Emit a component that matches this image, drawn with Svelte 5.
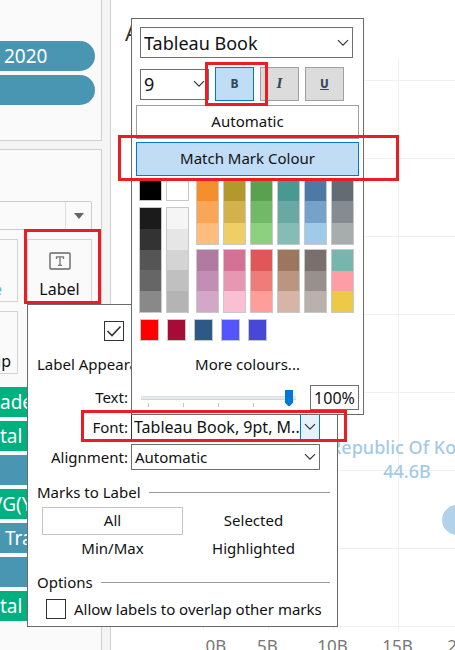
<script>
  const shelfPills = [{ text: '2020', pad: 4 }, { text: '', pad: 0 }];
  const markPills = [
    { text: 'ade', kind: 'green', indent: 0 },
    { text: 'tal T', kind: 'green', indent: 0 },
    { text: '', kind: 'blue', indent: 0 },
    { text: 'VG(Y', kind: 'green', indent: -9 },
    { text: 'Tra', kind: 'blue', indent: 5 },
    { text: '', kind: 'blue', indent: 0 },
    { text: 'tal T', kind: 'green', indent: 0 }
  ];
  const ramps = [
    ['#f58f2c', '#f9a756', '#ffbd7d'],
    ['#b3982b', '#d2b24b', '#f0ce66'],
    ['#59a14f', '#71b966', '#8dd17f'],
    ['#499993', '#69a9a4', '#86bcb6'],
    ['#4e79a7', '#76a1c8', '#a0cbe8'],
    ['#636c75', '#848b92', '#a7adad'],
    ['#b07aa1', '#c28eb6', '#d4a6c8'],
    ['#d37295', '#e697b2', '#fabfd2'],
    ['#e15759', '#f07c79', '#ff9d9a'],
    ['#9d7660', '#ba9580', '#d7b5a6'],
    ['#79706e', '#98908d', '#bab0ac'],
    ['#78b5ae', '#ff9da7', '#edc948']
  ];
  const darks = ['#1b1b1b', '#333333', '#555555', '#666666', '#898989'];
  const lights = ['#f5f5f5', '#e6e6e6', '#d4d4d4', '#c0c0c0', '#b4b4b4'];
  const custom = ['#ff0000', '#a60c35', '#2c5985', '#5555ff', '#4747d8'];
  const axis = ['0B', '5B', '10B', '15B', '20B'];

  let scope = $state('All');
  let opacity = $state(100);
  let showLabels = $state(true);
  let overlap = $state(false);
</script>

{#snippet chevron()}
  <svg class="chev" viewBox="0 0 12 8" width="12" height="8" aria-hidden="true">
    <path d="M1 1.2 L6 6.2 L11 1.2" fill="none" stroke="#333" stroke-width="1.2" />
  </svg>
{/snippet}

<div class="app">
  <aside class="side">
    <section class="card shelf">
      {#each shelfPills as p}
        <div class="pill blue round" style="padding-left: {p.pad}px">{p.text}</div>
      {/each}
    </section>
    <section class="card marks">
      <div class="mark-type">
        <select aria-label="Mark type"><option></option></select>
        <span class="tri"><svg width="10" height="6" viewBox="0 0 10 6" aria-hidden="true"><path d="M0 0H10L5 6Z" fill="#666" /></svg></span>
      </div>
      <div class="tiles">
        <button class="tile cut size">e</button>
        <button class="tile">
          <svg width="22" height="18" viewBox="0 0 22 18" aria-hidden="true">
            <rect x="1" y="1" width="20" height="16" rx="1" fill="none" stroke="#666" stroke-width="1.4" />
            <path d="M7.5 7V4.8H14.5V7M11 4.8V13.4M9 13.4H13" fill="none" stroke="#777" stroke-width="1.3" />
          </svg>
          Label
        </button>
        <button class="tile cut">ip</button>
      </div>
      <div class="pills">
        {#each markPills as p}
          <div class="pill {p.kind}" style="text-indent: {p.indent}px">{p.text}</div>
        {/each}
      </div>
    </section>
  </aside>

  <main class="view">
    <h1>A</h1>
    <div class="plot">
      <div class="rows"></div>
      <div class="cols"></div>
      <div class="point-label">Republic Of Korea<br />44.6B</div>
      <div class="point"></div>
    </div>
    <div class="axis">
      {#each axis as a}<span>{a}</span>{/each}
    </div>
  </main>

  <div class="label-menu">
    <label class="show"><input type="checkbox" bind:checked={showLabels} />Show mark labels</label>
    <h2>Label Appearance</h2>
    <div class="form">
      <label for="text">Text:</label>
      <input id="text" type="text" class="field" />
      <label for="font">Font:</label>
      <div class="drop open">
        <select id="font"><option>Tableau Book, 9pt, M..</option></select>
        {@render chevron()}
      </div>
      <label for="align">Alignment:</label>
      <div class="drop">
        <select id="align"><option>Automatic</option></select>
        {@render chevron()}
      </div>
    </div>
    <h2 class="ruled">Marks to Label</h2>
    <div class="scope">
      {#each ['All', 'Selected', 'Min/Max', 'Highlighted'] as s}
        <button class:active={scope === s} onclick={() => (scope = s)}>{s}</button>
      {/each}
    </div>
    <h2 class="ruled options">Options</h2>
    <label class="overlap"><input type="checkbox" bind:checked={overlap} />Allow labels to overlap other marks</label>
  </div>

  <div class="font-menu">
    <div class="drop family">
      <select aria-label="Font family"><option>Tableau Book</option></select>
      {@render chevron()}
    </div>
    <div class="style-row">
      <div class="drop pt">
        <select aria-label="Font size"><option>9</option></select>
        {@render chevron()}
      </div>
      <button class="fmt on"><b>B</b></button>
      <button class="fmt"><i>I</i></button>
      <button class="fmt"><u>U</u></button>
    </div>
    <div class="modes">
      <button>Automatic</button>
      <button class="on">Match Mark Colour</button>
    </div>
    <div class="palette">
      <div class="greys">
        <button class="sw base" aria-label="Black" style="background: #000"></button>
        <button class="sw base" aria-label="White" style="background: #fff"></button>
        {#each [darks, lights] as ramp}
          <div class="sw ramp">
            {#each ramp as c}<button aria-label={c} style="background: {c}"></button>{/each}
          </div>
        {/each}
      </div>
      <div class="hues">
        {#each ramps as ramp}
          <div class="sw ramp">
            {#each ramp as c}<button aria-label={c} style="background: {c}"></button>{/each}
          </div>
        {/each}
      </div>
    </div>
    <div class="custom">
      {#each custom as c}<button class="sw" aria-label={c} style="background: {c}"></button>{/each}
    </div>
    <button class="more">More colours...</button>
    <div class="opacity">
      <div class="slider">
        <input type="range" min="0" max="100" bind:value={opacity} aria-label="Opacity" />
        <div class="ticks"><span></span><span></span><span></span><span></span></div>
      </div>
      <input class="pct" type="text" value="{opacity}%" aria-label="Opacity percent" />
    </div>
  </div>

  <div class="hl hl-label"></div>
  <div class="hl hl-bold"></div>
  <div class="hl hl-match"></div>
  <div class="hl hl-font"></div>
</div>

<style>
  :global(body) { margin: 0; }
  .app, .app * { box-sizing: border-box; }
  .app {
    position: relative;
    display: grid;
    grid-template-columns: 111px 1fr;
    height: 100vh;
    overflow: hidden;
    background: #fff;
    color: #111;
    font: 15px/22px "Noto Sans", "Open Sans", sans-serif;
  }
  button, select, input { font: inherit; color: inherit; margin: 0; }
  button { padding: 0; border: 0; background: none; }
  h1, h2 { margin: 0; font-weight: 400; }

  .side {
    display: flex;
    flex-direction: column;
    gap: 8px;
    min-height: 0;
    background: #f4f4f4;
    border-right: 1px solid #d0d0d0;
    padding-right: 8px;
    overflow: hidden;
  }
  .card { background: #fafafa; border: 1px solid #d0d0d0; border-left: 0; }
  .shelf { display: grid; gap: 4px; border-top: 0; padding: 41px 6px 35px 0; }
  .marks { flex: 1; padding-top: 51px; }
  .pill {
    height: 30px;
    color: #fff;
    font-size: 19px;
    line-height: 30px;
    white-space: nowrap;
    overflow: hidden;
  }
  .round { border-radius: 0 15px 15px 0; }
  .blue { background: #4996b2; }
  .green { background: #00b180; }
  .pills { display: grid; gap: 4px; margin: 13px 10px 0 0; }
  .mark-type {
    display: flex;
    width: 92px;
    height: 29px;
    border: 1px solid #ccc;
    border-left: 0;
    border-radius: 0 2px 2px 0;
  }
  .mark-type select { flex: 1; min-width: 0; appearance: none; border: 0; background: none; }
  .tri { display: grid; place-items: center; width: 26px; border-left: 1px solid #ddd; }
  .tiles {
    display: grid;
    grid-template-columns: 18px 65px;
    gap: 9px;
    margin-top: 9px;
  }
  .tile {
    display: flex;
    flex-direction: column;
    align-items: center;
    justify-content: flex-end;
    gap: 8px;
    height: 63px;
    padding-bottom: 1px;
    border: 1px solid #d4d4d4;
    font-size: 16px;
  }
  .cut { border-left: 0; align-items: flex-end; padding-right: 6px; }
  .cut.size { padding-right: 15px; color: #6ab8e8; }

  .view { display: flex; flex-direction: column; }
  h1 { padding: 18px 0 0 14px; height: 59px; font-size: 22px; line-height: 28px; color: #333; }
  .plot { position: relative; flex: none; height: 571px; margin-left: 92px; }
  .rows {
    position: absolute;
    inset: 21px 0 0;
    background: repeating-linear-gradient(to bottom, #f0f0f0 0 1px, transparent 1px 78px);
  }
  .cols {
    position: absolute;
    inset: 0;
    background: repeating-linear-gradient(to right, #f0f0f0 0 1px, transparent 1px 65px);
  }
  .point-label {
    position: absolute;
    left: 126px;
    top: 376px;
    width: 156px;
    color: #a4cae6;
    font-size: 18px;
    font-weight: 500;
    line-height: 24px;
    text-align: center;
    white-space: nowrap;
  }
  .point {
    position: absolute;
    left: 239px;
    top: 446px;
    width: 30px;
    height: 30px;
    border-radius: 50%;
    background: #b1d2e9;
  }
  .axis { display: flex; margin-left: 86px; color: #777; font-size: 17px; line-height: 32px; }
  .axis span { flex: 0 0 65px; text-align: center; }
  .axis span:first-child { flex-basis: 38px; }

  .drop {
    position: relative;
    display: flex;
    align-items: center;
    border: 1px solid #707070;
    background: #fff;
  }
  .drop select {
    appearance: none;
    width: 100%;
    height: 100%;
    border: 0;
    padding: 0 0 0 3px;
    background: none;
  }
  .chev { position: absolute; right: 3px; }

  input[type='checkbox'] {
    appearance: none;
    flex: none;
    width: 20px;
    height: 20px;
    border: 1px solid #333;
    background: #fff;
  }
  input[type='checkbox']:checked {
    background: #fff url("data:image/svg+xml,%3Csvg xmlns='http://www.w3.org/2000/svg' viewBox='0 0 18 18'%3E%3Cpath d='M2.5 9L7 13.5L15.5 4.5' fill='none' stroke='%23333' stroke-width='1.6'/%3E%3C/svg%3E");
  }

  .label-menu {
    position: absolute;
    left: 27px;
    top: 304px;
    width: 311px;
    padding: 16px 7px 7px 9px;
    border: 1px solid #6b6b6b;
    background: #fff;
  }
  h2 { font-size: 15px; line-height: 22px; }
  .show, .overlap { display: flex; align-items: center; gap: 8px; height: 20px; white-space: nowrap; }
  .show { margin-left: 67px; }
  .show + h2 { margin-top: 12px; }
  .form {
    display: grid;
    grid-template-columns: 91px 189px;
    grid-auto-rows: 26px;
    gap: 4px 3px;
    margin-top: 9px;
  }
  .form label { text-align: right; line-height: 26px; }
  .field { border: 1px solid #707070; min-width: 0; }
  .open { border-color: #333; font-size: 16px; }
  .open select { padding-left: 2px; }
  .open::after {
    content: '';
    position: absolute;
    right: -1px;
    top: 0;
    bottom: 0;
    width: 18px;
    border: solid #0078d7;
    border-width: 0 1px;
    background: #e5f1fb;
  }
  .open .chev { z-index: 1; }
  .ruled { display: flex; align-items: center; gap: 8px; margin-top: 11px; }
  .ruled::after { content: ''; flex: 1; height: 1px; background: #999; }
  .scope { display: grid; grid-template-columns: 141px 141px; margin: 4px 0 0 5px; }
  .scope button { height: 28px; padding-bottom: 2px; line-height: 22px; border: 1px solid transparent; }
  .scope .active { border-color: #c4c4c4; }
  .options { margin-top: 8px; }
  .overlap { margin: 6px 0 0 9px; }

  .font-menu {
    position: absolute;
    left: 131px;
    top: 18px;
    width: 233px;
    padding: 8px 4px 4px;
    border: 1px solid #6b6b6b;
    background: #fff;
  }
  .family { height: 31px; margin: 0 6px 0 4px; font-size: 18px; }
  .pt { width: 69px; height: 31px; font-size: 18px; }
  .style-row { display: flex; align-items: center; gap: 6px; margin: 9px 0 0 4px; }
  .fmt {
    width: 39px;
    height: 34px;
    border: 1px solid #a0a0a0;
    background: #dcdcdc;
    color: #34495e;
    font: 700 12px/1 "DejaVu Sans Condensed", sans-serif;
  }
  .fmt i { font-family: "DejaVu Serif", serif; }
  .on { background: #c0ddf5; border-color: #0078d7; }
  .modes { display: grid; gap: 3px; margin-top: 4px; }
  .modes button { height: 34px; padding-bottom: 2px; border: 1px solid #a0a0a0; }
  .modes .on { border-color: #0078d7; }
  .palette { display: flex; gap: 7px; margin: 3px 0 0 3px; }
  .greys { display: grid; grid-template: 22px 106px / 23px 23px; gap: 6px 4px; }
  .hues { display: grid; grid-template: 66px 64px / repeat(6, 23px); gap: 4px; }
  .sw { border: 1px solid #c8c8c8; }
  .ramp { display: flex; flex-direction: column; }
  .ramp button { flex: 1; min-height: 0; }
  .custom { display: flex; gap: 8px; margin: 6px 0 0 4px; }
  .custom .sw { width: 19px; height: 22px; }
  .more { display: block; width: 100%; height: 26px; margin-top: 10px; }
  .opacity { display: flex; gap: 14px; margin: 8px 0 0 5px; }
  .slider {
    width: 155px;
    padding: 5px 3px 0 0;
    background: linear-gradient(#d0d6d6, #e7eaea 1px 3px, #d0d6d6 3px) 0 11px / 100% 4px no-repeat;
  }
  .slider input {
    display: block;
    appearance: none;
    width: 100%;
    height: 16px;
    background: none;
  }
  .slider input::-webkit-slider-thumb {
    appearance: none;
    width: 8px;
    height: 16px;
    background: #0078d7;
    clip-path: polygon(0 0, 100% 0, 100% 80%, 60% 100%, 40% 100%, 0 80%);
  }
  .ticks { display: flex; gap: 34px; margin: -3px 0 0 7px; }
  .ticks span { width: 1px; height: 4px; background: #c4c4c4; }
  .pct { width: 49px; height: 25px; padding: 0; border: 1px solid #707070; font-size: 16px; text-align: center; }

  .hl { position: absolute; border: 3px solid #ed1c24; pointer-events: none; }
  .hl-label { left: 24px; top: 229px; width: 77px; height: 75px; }
  .hl-bold { left: 205px; top: 62px; width: 63px; height: 44px; }
  .hl-match { left: 118px; top: 135px; width: 281px; height: 46px; }
  .hl-font { left: 81px; top: 410px; width: 266px; height: 32px; }
</style>
